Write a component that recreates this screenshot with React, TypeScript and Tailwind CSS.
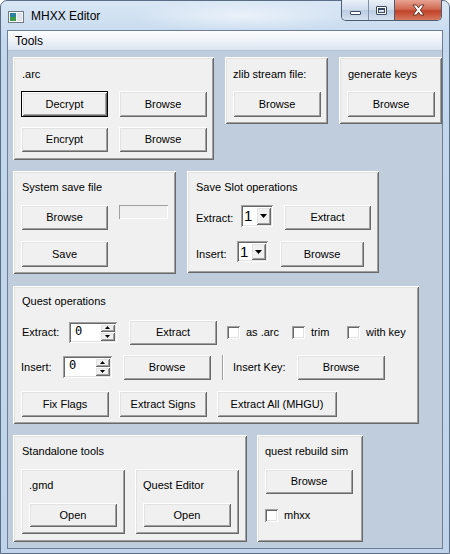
import React from 'react';

const raised =
  'bg-[#f0f0f0] shadow-[inset_1px_1px_#ffffff,inset_-1px_-1px_#696969,inset_2px_2px_#e3e3e3,inset_-2px_-2px_#a0a0a0]';
const sunken =
  'shadow-[inset_1px_1px_#a0a0a0,inset_-1px_-1px_#ffffff,inset_2px_2px_#696969,inset_-2px_-2px_#e3e3e3]';

const Btn = ({ w, h = 26, def = false, className = '', children }: { w: number; h?: number; def?: boolean; className?: string; children: React.ReactNode }) => (
  <div
    className={`flex items-center justify-center text-[11px] text-black shrink-0 ${
      def
        ? 'bg-[#f0f0f0] shadow-[inset_0_0_0_1px_#000000,inset_2px_2px_#ffffff,inset_-2px_-2px_#696969,inset_3px_3px_#e3e3e3,inset_-3px_-3px_#a0a0a0]'
        : raised
    } ${className}`}
    style={{ width: w, height: h }}
  >
    {children}
  </div>
);

const Label = ({ children, className = '' }: { children: React.ReactNode; className?: string }) => (
  <div className={`text-[11px] leading-[14px] text-black whitespace-nowrap ${className}`}>{children}</div>
);

const Check = ({ label, className = '' }: { label: string; className?: string }) => (
  <div className={`flex items-center shrink-0 ${className}`}>
    <div className={`w-[13px] h-[13px] bg-white ${sunken}`} />
    <span className="ml-[6px] text-[11px] leading-[14px] whitespace-nowrap">{label}</span>
  </div>
);

const Spin = ({ w, h }: { w: number; h: number }) => (
  <div className={`flex bg-white p-[2px] shrink-0 ${sunken}`} style={{ width: w, height: h }}>
    <div className="flex-1 pl-[4px] text-[12px] leading-[15px] font-['DejaVu_Sans_Mono',monospace]">0</div>
    <div className="flex flex-col w-[15px]">
      <div className={`flex-1 flex items-center justify-center ${raised}`}>
        <svg width="5" height="3" viewBox="0 0 5 3"><path d="M2.5 0 L5 3 L0 3 Z" fill="#000" /></svg>
      </div>
      <div className={`flex-1 flex items-center justify-center ${raised}`}>
        <svg width="5" height="3" viewBox="0 0 5 3"><path d="M0 0 L5 0 L2.5 3 Z" fill="#000" /></svg>
      </div>
    </div>
  </div>
);

const Combo = ({ w, h }: { w: number; h: number }) => (
  <div className={`flex bg-white p-[2px] shrink-0 ${sunken}`} style={{ width: w, height: h }}>
    <div className="flex-1 pl-[1px] text-[15px] leading-[17px]">1</div>
    <div className={`w-[15px] flex items-center justify-center ${raised}`}>
      <svg width="7" height="4" viewBox="0 0 7 4"><path d="M0 0 L7 0 L3.5 4 Z" fill="#000" /></svg>
    </div>
  </div>
);

const Frame = ({ w, h, className = '', children }: { w: number; h: number; className?: string; children: React.ReactNode }) => (
  <div className={`${raised} shrink-0 ${className}`} style={{ width: w, height: h }}>
    {children}
  </div>
);

export default function App() {
  return (
    <div className="w-[450px] h-[554px] overflow-hidden bg-white font-['Liberation_Sans',Arial,sans-serif]">
      <div className="h-full flex flex-col rounded-t-[7px] border border-[#5b6d84] bg-[linear-gradient(to_bottom,#d9e7f5,#c4d8ed_40px,#bfd4ea)] px-[6px] pb-[4px]">
        {/* title bar */}
        <div className="h-[29px] flex items-start shrink-0 bg-[radial-gradient(ellipse_110px_16px_at_235px_15px,rgba(255,255,255,0.55),transparent)]">
          <svg className="mt-[10px] ml-[1px]" width="16" height="12" viewBox="0 0 16 12">
            <rect x="0.5" y="0.5" width="15" height="11" fill="#f4f6f8" stroke="#6f7a86" />
            <rect x="2" y="2" width="6" height="8" fill="#2f7fa0" />
            <rect x="2" y="6" width="6" height="4" fill="#3f9a4a" />
            <rect x="9" y="2" width="5" height="8" fill="#dfe4ea" />
          </svg>
          <div className="ml-[7px] mt-[7px] text-[12px] leading-[16px] text-black">MHXX Editor</div>
          <div className="ml-auto mr-[1px] -mt-[1px] flex h-[21px] rounded-b-[5px] border border-t-0 border-[#4c5d73] overflow-hidden">
            <div className="w-[27px] flex items-end justify-center pb-[5px] bg-[linear-gradient(to_bottom,#e9f0f8,#cfdcec_50%,#bccde2_51%,#d3e0ef)] border-r border-[#7f90a6]">
              <div className="w-[11px] h-[4px] bg-white border border-[#3b4a5e] rounded-[1px]" />
            </div>
            <div className="w-[26px] flex items-center justify-center bg-[linear-gradient(to_bottom,#e9f0f8,#cfdcec_50%,#bccde2_51%,#d3e0ef)] border-r border-[#4c5d73]">
              <div className="w-[11px] h-[9px] border border-[#3b4a5e] bg-white p-[1px] rounded-[1px]">
                <div className="w-full h-full border border-[#3b4a5e] border-t-2 bg-[#d5e1ee]" />
              </div>
            </div>
            <div className="w-[46px] flex items-center justify-center bg-[linear-gradient(to_bottom,#e8a493,#d06a52_45%,#c0412a_55%,#d77a5e)]">
              <svg width="15" height="12" viewBox="0 0 15 12">
                <path d="M2 1 L5.5 1 L7.5 3.8 L9.5 1 L13 1 L9.3 6 L13 11 L9.5 11 L7.5 8.2 L5.5 11 L2 11 L5.7 6 Z" fill="#ffffff" stroke="#5a2a22" strokeWidth="0.9" strokeLinejoin="round" />
              </svg>
            </div>
          </div>
        </div>

        <div className="flex-1 flex flex-col border border-[#6e7f95]">
          {/* menu bar */}
          <div className="h-[20px] shrink-0 flex items-center bg-[linear-gradient(to_bottom,#fdfdfe,#eef2f9_50%,#dce4f1)] border-b border-[#b6c3d5]">
            <span className="ml-[7px] text-[12px] leading-[16px] text-black">Tools</span>
          </div>

          {/* client */}
          <div className="flex-1 bg-[#bfcddc] pt-[6px] pl-[5px]">
            {/* row 1 */}
            <div className="flex items-start gap-[11px]">
              <Frame w={201} h={103} className="pt-[10px] px-[8px]">
                <Label className="ml-[1px]">.arc</Label>
                <div className="mt-[10px] flex gap-[11px]">
                  <Btn w={87} def>Decrypt</Btn>
                  <Btn w={88}>Browse</Btn>
                </div>
                <div className="mt-[10px] flex gap-[11px]">
                  <Btn w={87} h={25}>Encrypt</Btn>
                  <Btn w={88} h={25}>Browse</Btn>
                </div>
              </Frame>
              <Frame w={103} h={67} className="pt-[10px] px-[8px]">
                <Label>zlib stream file:</Label>
                <div className="mt-[10px]">
                  <Btn w={88}>Browse</Btn>
                </div>
              </Frame>
              <Frame w={103} h={67} className="pt-[10px] px-[8px]">
                <Label className="ml-[1px]">generate keys</Label>
                <div className="mt-[10px]">
                  <Btn w={88}>Browse</Btn>
                </div>
              </Frame>
            </div>

            {/* row 2 */}
            <div className="mt-[11px] flex items-start gap-[11px]">
              <Frame w={163} h={103} className="pt-[9px] px-[8px]">
                <Label className="ml-[1px]">System save file</Label>
                <div className="mt-[11px] flex items-start gap-[11px]">
                  <Btn w={87} h={25}>Browse</Btn>
                  <div className="w-[50px] h-[14px] bg-[#f0f0f0] shadow-[inset_1px_1px_#a0a0a0,inset_-1px_-1px_#ffffff]" />
                </div>
                <div className="mt-[11px]">
                  <Btn w={87} h={26}>Save</Btn>
                </div>
              </Frame>
              <Frame w={192} h={102} className="pt-[9px] px-[8px]">
                <Label className="ml-[1px]">Save Slot operations</Label>
                <div className="mt-[11px] flex items-start">
                  <Label className="ml-[1px] w-[47px] mt-[6px]">Extract:</Label>
                  <Combo w={32} h={22} />
                  <Btn w={87} h={25} className="ml-[11px]">Extract</Btn>
                </div>
                <div className="mt-[11px] flex items-start">
                  <Label className="ml-[1px] w-[41px] mt-[6px]">Insert:</Label>
                  <Combo w={31} h={21} />
                  <Btn w={84} h={26} className="ml-[12px]">Browse</Btn>
                </div>
              </Frame>
            </div>

            {/* row 3 */}
            <div className="mt-[12px]">
              <Frame w={406} h={138} className="pt-[8px] px-[8px]">
                <Label className="ml-[1px]">Quest operations</Label>
                <div className="mt-[11px] h-[26px] flex items-center">
                  <Label className="ml-[1px] w-[47px]">Extract:</Label>
                  <Spin w={48} h={21} />
                  <Btn w={88} h={25} className="ml-[12px]">Extract</Btn>
                  <Check label="as .arc" className="ml-[10px] w-[65px]" />
                  <Check label="trim" className="w-[55px]" />
                  <Check label="with key" />
                </div>
                <div className="mt-[9px] h-[26px] flex items-center">
                  <Label className="w-[42px]">Insert:</Label>
                  <Spin w={49} h={22} />
                  <Btn w={88} h={25} className="ml-[11px]">Browse</Btn>
                  <div className="ml-[11px] w-[2px] h-[25px] border-l border-[#a0a0a0] border-r border-r-white" />
                  <Label className="ml-[9px] w-[64px]">Insert Key:</Label>
                  <Btn w={88} h={25}>Browse</Btn>
                </div>
                <div className="mt-[11px] flex gap-[10px]">
                  <Btn w={88}>Fix Flags</Btn>
                  <Btn w={88}>Extract Signs</Btn>
                  <Btn w={120}>Extract All (MHGU)</Btn>
                </div>
              </Frame>
            </div>

            {/* row 4 */}
            <div className="mt-[11px] flex items-start gap-[10px]">
              <Frame w={234} h={107} className="pt-[9px] px-[8px]">
                <Label className="ml-[1px]">Standalone tools</Label>
                <div className="mt-[11px] flex gap-[10px]">
                  <Frame w={104} h={65} className="pt-[9px] px-[8px]">
                    <Label>.gmd</Label>
                    <div className="mt-[11px]">
                      <Btn w={88} h={24}>Open</Btn>
                    </div>
                  </Frame>
                  <Frame w={104} h={65} className="pt-[9px] px-[8px]">
                    <Label>Quest Editor</Label>
                    <div className="mt-[11px]">
                      <Btn w={88} h={24}>Open</Btn>
                    </div>
                  </Frame>
                </div>
              </Frame>
              <Frame w={106} h={107} className="pt-[9px] px-[8px]">
                <Label>quest rebuild sim</Label>
                <div className="mt-[11px]">
                  <Btn w={88} h={25}>Browse</Btn>
                </div>
                <Check label="mhxx" className="mt-[14px]" />
              </Frame>
            </div>
          </div>
        </div>
      </div>
    </div>
  );
}
